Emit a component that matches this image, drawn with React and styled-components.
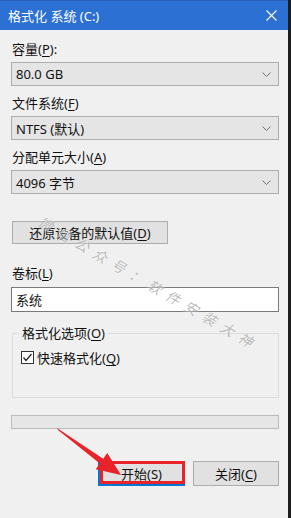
import React from "react";
import styled, { createGlobalStyle } from "styled-components";

const Global = createGlobalStyle`
  html, body { margin: 0; padding: 0; background: #1e1e1e; }
  body { overflow: hidden; }
  * { box-sizing: border-box; }
`;

const FONT = `"Noto Sans", "Noto Sans CJK SC", sans-serif`;

const Window = styled.div`
  position: relative;
  width: 291px;
  height: 518px;
  display: flex;
  flex-direction: column;
  background: #f0f0f0;
  border-right: 3px solid #1d1d1d;
  font-family: ${FONT};
  font-size: 13px;
  color: #111;
  overflow: hidden;
`;

const TitleBar = styled.div`
  height: 30px;
  flex: none;
  display: flex;
  align-items: center;
  justify-content: space-between;
  background: #2c70d3;
  border-top: 1px solid #245fb8;
  padding: 0 6px 0 8px;
  color: #fff;
`;

const Title = styled.span`
  font-size: 13px;
  line-height: 18px;
`;

const CloseBtn = styled.span`
  width: 22px;
  height: 22px;
  display: flex;
  align-items: center;
  justify-content: center;
`;

const Content = styled.div`
  flex: 1;
  display: flex;
  flex-direction: column;
  padding: 10px 9px 0 11px;
`;

const Label = styled.div`
  height: 18px;
  line-height: 18px;
  margin: ${(p) => p.$m || "0 0 4px 1px"};
`;

const U = styled.span`
  text-decoration: underline;
  text-underline-offset: 2px;
`;

const Select = styled.div`
  height: 24px;
  display: flex;
  align-items: center;
  justify-content: space-between;
  background: #e5e5e5;
  border: 1px solid #adadad;
  padding: 0 7px 0 4px;
  margin-bottom: 8px;
`;

const Button = styled.div`
  height: ${(p) => p.$h || 25}px;
  width: ${(p) => p.$w}px;
  display: flex;
  align-items: center;
  justify-content: center;
  background: #e1e1e1;
  border: ${(p) => (p.$default ? "2px solid #0078d7" : "1px solid #adadad")};
  margin: ${(p) => p.$m || "0"};
  position: relative;
`;

const Input = styled.div`
  height: 25px;
  display: flex;
  align-items: center;
  background: #fff;
  border: 1px solid #7a7a7a;
  padding: 0 4px;
`;

const Group = styled.fieldset`
  margin: 12px 0 0 1px;
  padding: 0 0 0 8px;
  height: 74px;
  border: 1px solid #dcdcdc;
  min-width: 0;
`;

const Legend = styled.legend`
  padding: 0 2px;
  margin-left: -1px;
  line-height: 18px;
`;

const CheckRow = styled.div`
  display: flex;
  align-items: center;
  gap: 3px;
  margin-top: 6px;
`;

const Box = styled.span`
  width: 13px;
  height: 13px;
  flex: none;
  background: #fff;
  border: 1px solid #333;
  display: flex;
  align-items: center;
  justify-content: center;
`;

const Progress = styled.div`
  height: 14px;
  margin-top: 17px;
  background: #e6e6e6;
  border: 1px solid #bcbcbc;
`;

const ButtonRow = styled.div`
  display: flex;
  justify-content: flex-end;
  gap: 8px;
  margin-top: 32px;
`;

const RedFrame = styled.span`
  position: absolute;
  left: 0px;
  top: -2px;
  right: -2px;
  bottom: 0px;
  border: 3px solid #e8232a;
  pointer-events: none;
`;

const Arrow = styled.svg`
  position: absolute;
  left: 0;
  top: 0;
  pointer-events: none;
`;

const Watermark = styled.span`
  position: absolute;
  left: 40px;
  top: 210px;
  transform: rotate(30deg);
  transform-origin: 0 50%;
  white-space: nowrap;
  font-size: 14px;
  letter-spacing: 7px;
  color: rgba(140, 140, 140, 0.6);
  text-shadow: 0 0 2px #fff;
  font-style: italic;
  pointer-events: none;
`;

const Chevron = () => (
  <svg width="9" height="5" viewBox="0 0 9 5">
    <polyline points="0.5,0.5 4.5,4.5 8.5,0.5" fill="none" stroke="#707070" strokeWidth="1" />
  </svg>
);

const Field = ({ label, value }) => (
  <>
    <Label>{label}</Label>
    <Select>
      <span>{value}</span>
      <Chevron />
    </Select>
  </>
);

export default function App() {
  return (
    <>
      <Global />
      <Window>
        <TitleBar>
          <Title>格式化 系统 (C:)</Title>
          <CloseBtn>
            <svg width="11" height="11" viewBox="0 0 11 11">
              <path d="M0.5 0.5 L10.5 10.5 M10.5 0.5 L0.5 10.5" stroke="#fff" strokeWidth="1.1" />
            </svg>
          </CloseBtn>
        </TitleBar>
        <Content>
          <Field label={<>容量(<U>P</U>):</>} value="80.0 GB" />
          <Field label={<>文件系统(<U>F</U>)</>} value="NTFS (默认)" />
          <Field label={<>分配单元大小(<U>A</U>)</>} value="4096 字节" />
          <Button $w={156} $h={23} $m="19px 0 0 1px">
            还原设备的默认值(<U>D</U>)
          </Button>
          <Label $m="20px 0 5px 1px">
            卷标(<U>L</U>)
          </Label>
          <Input>系统</Input>
          <Group>
            <Legend>
              格式化选项(<U>O</U>)
            </Legend>
            <CheckRow>
              <Box>
                <svg width="11" height="11" viewBox="0 0 11 11">
                  <polyline points="1.5,5.5 4,8.5 9.5,2" fill="none" stroke="#222" strokeWidth="1.2" />
                </svg>
              </Box>
              <span>
                快速格式化(<U>Q</U>)
              </span>
            </CheckRow>
          </Group>
          <Progress />
          <ButtonRow>
            <Button $w={87} $default>
              开始(<U>S</U>)
              <RedFrame />
            </Button>
            <Button $w={86}>
              关闭(<U>C</U>)
            </Button>
          </ButtonRow>
        </Content>
        <Watermark>微信公众号：软件安装大神</Watermark>
        <Arrow width="288" height="518" viewBox="0 0 288 518">
          <polygon
            points="57,428 103.2,458.7 107.3,453 121,475 95.7,469.2 99.8,463.5 58,430"
            fill="#e8232a"
          />
        </Arrow>
      </Window>
    </>
  );
}
